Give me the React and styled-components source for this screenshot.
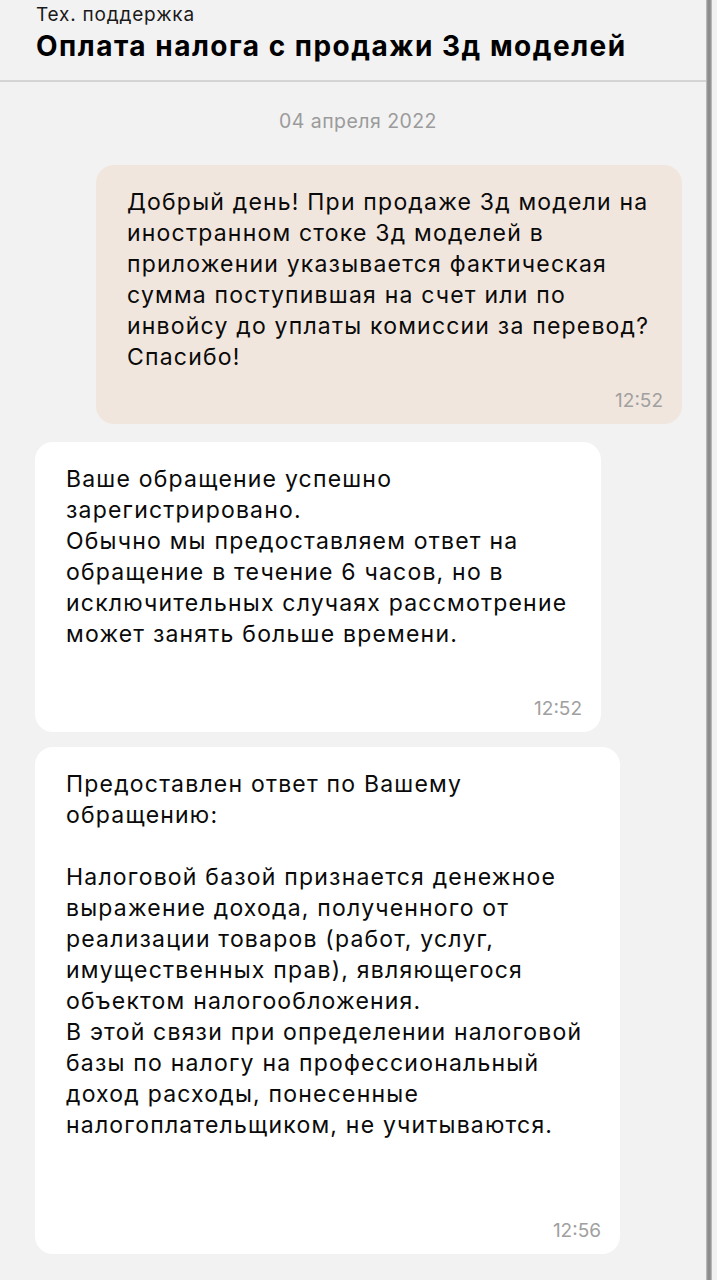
import styled, { createGlobalStyle } from 'styled-components'

const GlobalStyle = createGlobalStyle`
  html, body {
    margin: 0;
    padding: 0;
    background: #f2f2f2;
  }
  body {
    font-family: Inter, "Noto Sans", sans-serif;
    -webkit-font-smoothing: antialiased;
  }
`

const Page = styled.div`
  display: flex;
  width: 717px;
  min-height: 1280px;
  background: #f2f2f2;
`

const Screen = styled.div`
  flex: 0 0 706px;
  display: flex;
  flex-direction: column;
`

const Edge = styled.div`
  flex: 0 0 6px;
  background: linear-gradient(to right, #c8c8c8, #8c8c8c 30%, #8c8c8c 70%, #c8c8c8);
`

const Header = styled.header`
  padding: 3px 0 17px 36px;
  border-bottom: 2px solid #d4d4d4;

  .caption{
    margin: 0 0 2px;
    font-size: 19px;
    line-height: 24px;
    letter-spacing: 0.8px;
    color: #1a1a1a;
  }

  .title{
    margin: 0;
    font-size: 28px;
    line-height: 34px;
    font-weight: 700;
    letter-spacing: 1.5px;
    color: #000;
  }
`

const Feed = styled.div`
  display: flex;
  flex-direction: column;
  padding-top: 27px;
`

const DateLabel = styled.div`
  align-self: center;
  margin: 0 0 32px 10px;
  font-size: 19.5px;
  line-height: 24px;
  letter-spacing: 0.45px;
  color: #9b9b9b;
`

const Bubble = styled.div`
  box-sizing: border-box;
  width: ${p => p.width}px;
  margin-left: ${p => p.left}px;
  margin-bottom: ${p => p.gap}px;
  padding: 22px 19px 12px 31px;
  border-radius: 18px;
  background: ${p => p.own ? '#f1e6dd' : '#ffffff'};
  display: flex;
  flex-direction: column;
`

const Text = styled.div`
  font-size: 23px;
  line-height: 31px;
  letter-spacing: 1.2px;
  color: #0a0a0a;
  white-space: nowrap;
  margin-bottom: ${p => 17 + p.tail * 31}px;
`

const Time = styled.span`
  align-self: flex-end;
  font-size: 19px;
  line-height: 22px;
  color: #a0a0a0;
`

const messages = [
  {
    own: true, left: 96, width: 586, gap: 18, tail: 0, time: '12:52',
    lines: [
      'Добрый день! При продаже 3д модели на',
      'иностранном стоке 3д моделей в',
      'приложении указывается фактическая',
      'сумма поступившая на счет или по',
      'инвойсу до уплаты комиссии за перевод?',
      'Спасибо!',
    ],
  },
  {
    own: false, left: 35, width: 566, gap: 15, tail: 1, time: '12:52',
    lines: [
      'Ваше обращение успешно',
      'зарегистрировано.',
      'Обычно мы предоставляем ответ на',
      'обращение в течение 6 часов, но в',
      'исключительных случаях рассмотрение',
      'может занять больше времени.',
    ],
  },
  {
    own: false, left: 35, width: 585, gap: 0, tail: 2, time: '12:56',
    lines: [
      'Предоставлен ответ по Вашему',
      'обращению:',
      '',
      'Налоговой базой признается денежное',
      'выражение дохода, полученного от',
      'реализации товаров (работ, услуг,',
      'имущественных прав), являющегося',
      'объектом налогообложения.',
      'В этой связи при определении налоговой',
      'базы по налогу на профессиональный',
      'доход расходы, понесенные',
      'налогоплательщиком, не учитываются.',
    ],
  },
]

function Message({ message }) {
  let { own, left, width, gap, tail, time, lines } = message

  return (
    <Bubble own={own} left={left} width={width} gap={gap}>
      <Text tail={tail}>
        {lines.map((line, i) => (
          <div key={i}>{line || '\u00a0'}</div>
        ))}
      </Text>
      <Time>{time}</Time>
    </Bubble>
  )
}

function App() {
  return (
    <Page>
      <GlobalStyle />
      <Screen>
        <Header>
          <p className='caption'>Тех. поддержка</p>
          <h1 className='title'>Оплата налога с продажи 3д моделей</h1>
        </Header>
        <Feed>
          <DateLabel>04 апреля 2022</DateLabel>
          {messages.map((m, i) => <Message key={i} message={m} />)}
        </Feed>
      </Screen>
      <Edge />
    </Page>
  )
}

export default App
